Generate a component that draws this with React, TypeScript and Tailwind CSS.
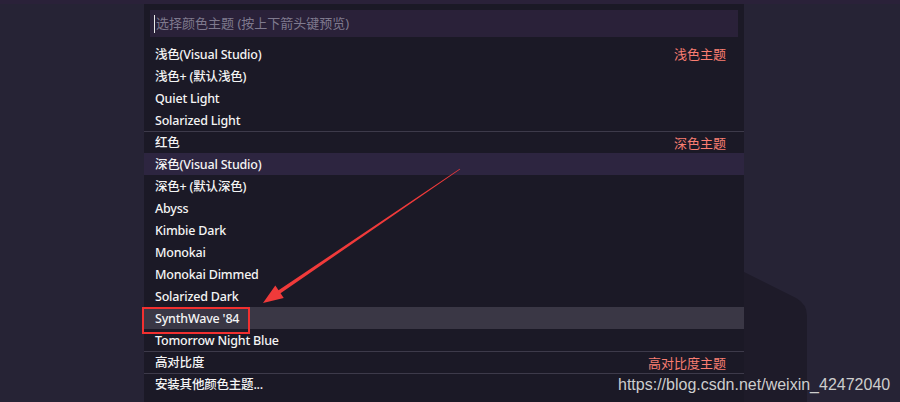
import React from "react";

type Item = {
  label: string;
  group?: string;
  separator?: boolean;
  active?: "focus" | "hover";
};

const items: Item[] = [
  { label: "浅色(Visual Studio)", group: "浅色主题" },
  { label: "浅色+ (默认浅色)" },
  { label: "Quiet Light" },
  { label: "Solarized Light" },
  { label: "红色", group: "深色主题", separator: true },
  { label: "深色(Visual Studio)", active: "focus" },
  { label: "深色+ (默认深色)" },
  { label: "Abyss" },
  { label: "Kimbie Dark" },
  { label: "Monokai" },
  { label: "Monokai Dimmed" },
  { label: "Solarized Dark" },
  { label: "SynthWave '84", active: "hover" },
  { label: "Tomorrow Night Blue" },
  { label: "高对比度", group: "高对比度主题", separator: true },
  { label: "安装其他颜色主题...", separator: true },
];

function ThemeRow({ item }: { item: Item }) {
  return (
    <div
      className={
        "h-[22px] flex items-center justify-between pl-[11px] pr-[18px] pt-[2px] text-[12.5px] " +
        (item.separator ? "border-t border-[#3d3a4a] " : "") +
        (item.active === "focus"
          ? "bg-[#2d2540] "
          : item.active === "hover"
          ? "bg-[#3a3745] "
          : "")
      }
    >
      <span className="text-[#f4f4f4] font-medium tracking-[-0.2px] whitespace-nowrap">{item.label}</span>
      {item.group && <span className="text-[#f97e72] text-[13px]">{item.group}</span>}
    </div>
  );
}

// arrow from the upper right down to the SynthWave row
function Arrow() {
  const tail = [460, 169];
  const tip = [263, 303];
  const dx = tip[0] - tail[0];
  const dy = tip[1] - tail[1];
  const len = Math.hypot(dx, dy);
  const ux = dx / len;
  const uy = dy / len;
  const nx = -uy;
  const ny = ux;
  const bx = tip[0] - ux * 20;
  const by = tip[1] - uy * 20;
  const pts = [
    [tail[0] + nx * 0.4, tail[1] + ny * 0.4],
    [bx + nx * 1.8, by + ny * 1.8],
    [bx + nx * 7.5, by + ny * 7.5],
    tip,
    [bx - nx * 7.5, by - ny * 7.5],
    [bx - nx * 1.8, by - ny * 1.8],
    [tail[0] - nx * 0.4, tail[1] - ny * 0.4],
  ]
    .map((p) => p.join(","))
    .join(" ");
  return (
    <svg className="absolute left-0 top-0 pointer-events-none" width="900" height="402">
      <polygon points={pts} fill="#f03a3a" />
    </svg>
  );
}

export default function App() {
  return (
    <div
      className="relative w-[900px] h-[402px] overflow-hidden bg-[#262335] flex flex-col"
      style={{ fontFamily: '"Noto Sans", "Noto Sans CJK SC", sans-serif' }}
    >
      <div className="h-1 bg-[#2a2139]" />

      {/* editor backdrop shape */}
      <svg className="absolute left-[744px] top-[272px]" width="70" height="130">
        <path d="M0 0 L52 26 Q63 32 63 44 L63 130 L0 130 Z" fill="#1e1b29" />
      </svg>

      <div className="flex-1 pl-[144px] flex">
        <div className="w-[600px] bg-[#1b1926] flex flex-col">
          <div className="mx-[6px] mt-[6px] h-[27px] bg-[#2a2139] flex items-center pl-[4px] text-[13px]">
            <span className="w-px h-[18px] bg-[#e8e8e8] mr-px" />
            <span className="text-[#7f7a8e] whitespace-nowrap">选择颜色主题 (按上下箭头键预览)</span>
          </div>
          <div className="mt-[6px] flex flex-col">
            {items.map((it) => (
              <ThemeRow key={it.label} item={it} />
            ))}
          </div>
        </div>
      </div>

      <Arrow />
      <div className="absolute left-[142px] top-[307px] w-[108px] h-[27px] border-2 border-[#f23030]" />

      <div
        className="absolute left-[618px] top-[373px] text-[16px] text-[#cdcdcd] whitespace-nowrap"
        style={{ fontFamily: '"Liberation Sans", Arial, sans-serif' }}
      >
        https://blog.csdn.net/weixin_42472040
      </div>
    </div>
  );
}
